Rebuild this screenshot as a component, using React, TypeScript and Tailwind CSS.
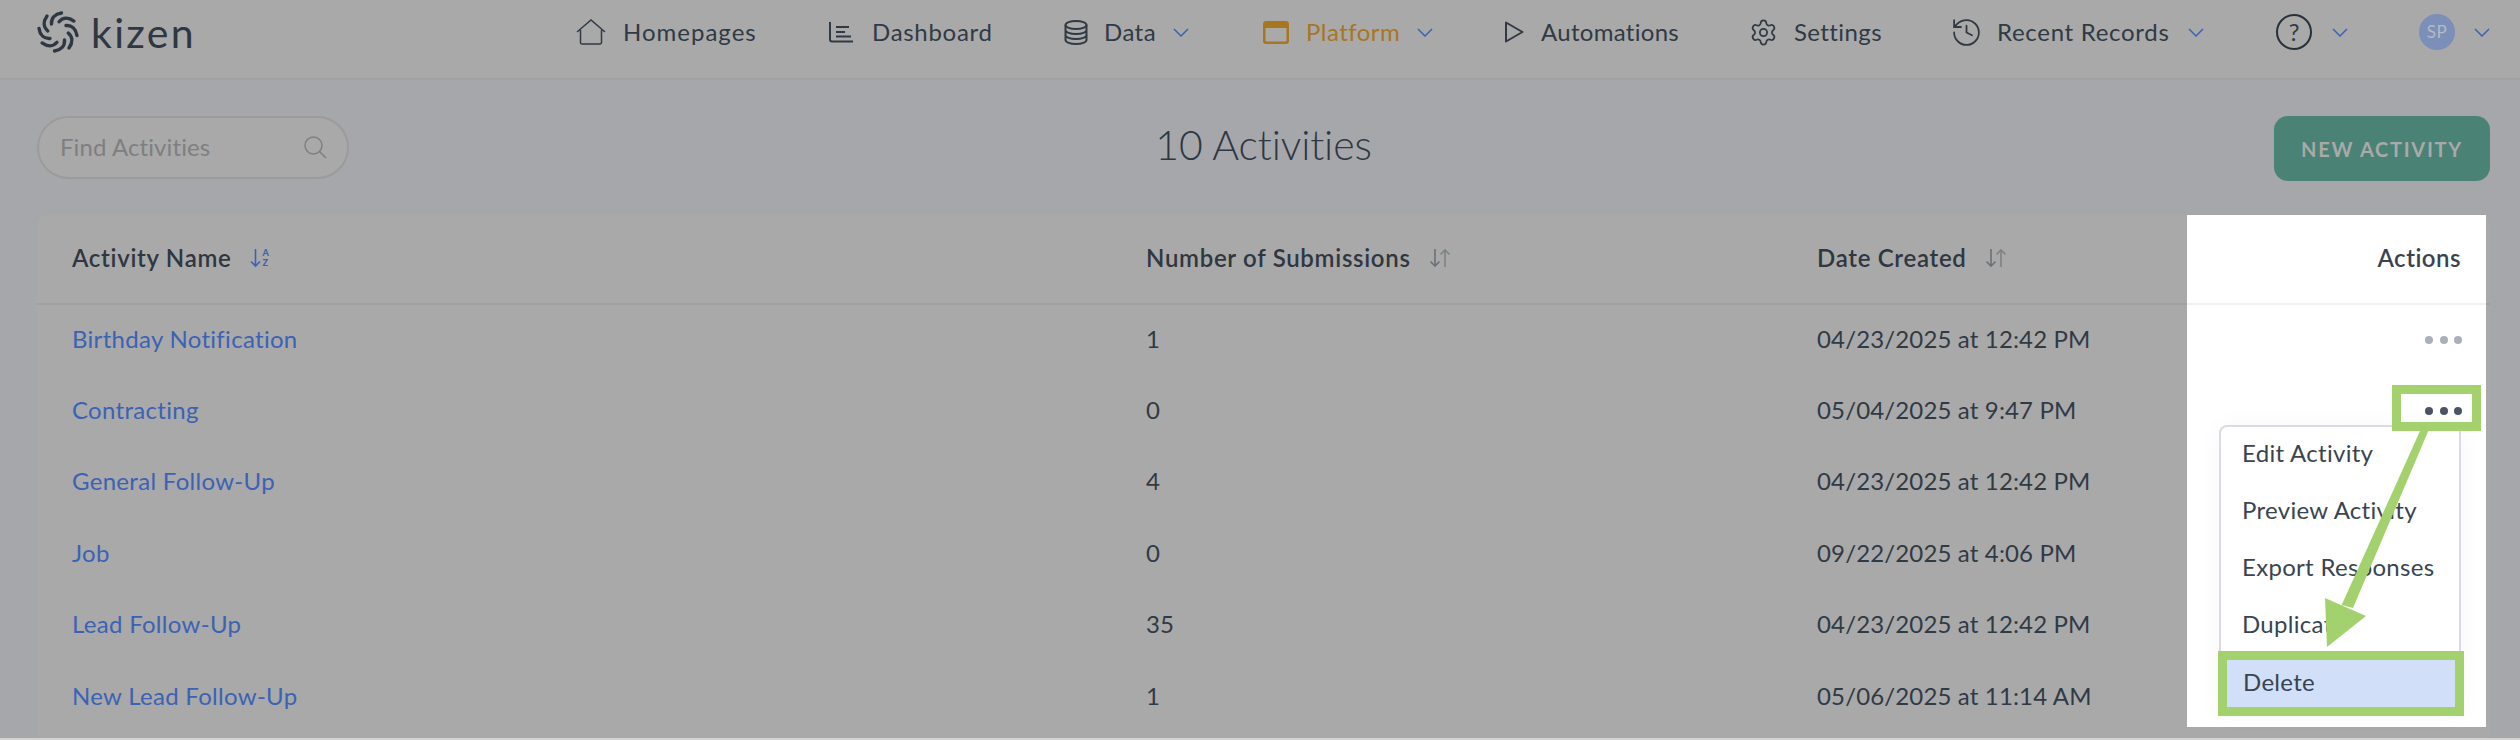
import React from 'react';
import { History, Settings } from 'lucide-react';

const rows = [
  { name: 'Birthday Notification', count: '1', date: '04/23/2025 at 12:42 PM' },
  { name: 'Contracting', count: '0', date: '05/04/2025 at 9:47 PM' },
  { name: 'General Follow-Up', count: '4', date: '04/23/2025 at 12:42 PM' },
  { name: 'Job', count: '0', date: '09/22/2025 at 4:06 PM' },
  { name: 'Lead Follow-Up', count: '35', date: '04/23/2025 at 12:42 PM' },
  { name: 'New Lead Follow-Up', count: '1', date: '05/06/2025 at 11:14 AM' },
];

const menuItems = ['Edit Activity', 'Preview Activity', 'Export Responses', 'Duplicate'];

const Chevron = ({ className }: { className?: string }) => (
  <svg width="16" height="9" viewBox="0 0 16 9" fill="none" stroke="#3b62b5" strokeWidth="1.5" className={className}>
    <path d="M1 1l7 7 7-7" />
  </svg>
);

const LogoMark = () => (
  <svg width="42" height="42" viewBox="-21 -21 42 42" fill="none" stroke="#2e3742" strokeWidth="3.4" strokeLinecap="round">
    {[0, 45, 90, 135, 180, 225, 270, 315].map((a) => (
      <path key={a} d="M-6.500 -8C-7 -14 -3 -18 3.500 -19" transform={`rotate(${a})`} />
    ))}
  </svg>
);

const NavItem = ({
  width,
  iconWidth,
  label,
  icon,
  chevronGap,
  color = 'text-[#303a45]',
  tracking = 'tracking-[0.45px]',
}: {
  width: string;
  iconWidth: string;
  label: string;
  icon: React.ReactNode;
  chevronGap?: string;
  color?: string;
  tracking?: string;
}) => (
  <div className={`flex items-center ${width}`}>
    <div className={`flex shrink-0 items-center ${iconWidth}`}>{icon}</div>
    <span className={`text-[24px] ${tracking} ${color}`}>{label}</span>
    {chevronGap && <Chevron className={chevronGap} />}
  </div>
);

const SortArrows = () => (
  <svg width="22" height="20" viewBox="0 0 22 20" fill="none" strokeWidth="1.6" className="ml-[18px]">
    <path d="M6 1v17M1.500 13.500L6 18l4.500-4.500" stroke="#6c7177" />
    <path d="M16 19V2M11.500 6.500L16 2l4.500 4.500" stroke="#7d8286" />
  </svg>
);

export default function App() {
  return (
    <div className="h-[740px] w-[2520px] overflow-hidden bg-[#a6a7aa] text-[#303a45]" style={{ fontFamily: 'Lato, sans-serif' }}>
      {/* top nav */}
      <nav className="flex h-[80px] items-center border-b-2 border-[#a1a1a1] bg-[#a9a9a9] pb-[14px] pl-[37px]">
        <div className="flex w-[539px] items-center">
          <LogoMark />
          <span className="ml-[12px] text-[41px] leading-none font-normal tracking-[2.300px] text-[#2e3742]">kizen</span>
        </div>
        <NavItem
          width="w-[252px]"
          iconWidth="w-[47px]"
          label="Homepages"
          tracking="tracking-[1px]"
          icon={
            <svg width="30" height="26" viewBox="0 0 30 26" fill="none" stroke="#303a45" strokeWidth="1.5">
              <path d="M1 13L15 1l14 12M4.500 11v12.500a1.500 1.500 0 0 0 1.500 1.500h18a1.500 1.500 0 0 0 1.500-1.500V11" />
            </svg>
          }
        />
        <NavItem
          width="w-[236px]"
          iconWidth="w-[44px]"
          label="Dashboard"
          tracking="tracking-[0.7px]"
          icon={
            <svg width="26" height="22" viewBox="0 0 26 22" fill="none" stroke="#303a45" strokeWidth="2">
              <path d="M2 1v17.500a2 2 0 0 0 2 2h21M8 6h13M8 11h9M8 15.500h15" />
            </svg>
          }
        />
        <NavItem
          width="w-[199px]"
          iconWidth="w-[40px]"
          label="Data"
          chevronGap="ml-[17px]"
          icon={
            <svg width="24" height="25" viewBox="0 0 24 25" fill="none" stroke="#303a45" strokeWidth="2">
              <ellipse cx="12" cy="5" rx="10.500" ry="4" />
              <path d="M1.500 5v15c0 2.200 4.700 4 10.500 4s10.500-1.800 10.500-4V5M1.500 10c0 2.200 4.700 4 10.500 4s10.500-1.800 10.500-4M1.500 15c0 2.200 4.700 4 10.500 4s10.500-1.800 10.500-4" />
            </svg>
          }
        />
        <NavItem
          width="w-[239px]"
          iconWidth="w-[43px]"
          label="Platform"
          color="text-[#a8761e]"
          chevronGap="ml-[17px]"
          icon={
            <svg width="26" height="23" viewBox="0 0 26 23" fill="none">
              <rect x="1.250" y="1.250" width="23.500" height="20.500" rx="2" stroke="#a8761e" strokeWidth="2.500" />
              <rect x="1" y="1" width="24" height="6" fill="#a8761e" />
            </svg>
          }
        />
        <NavItem
          width="w-[249px]"
          iconWidth="w-[39px]"
          label="Automations"
          tracking="tracking-[0.3px]"
          icon={
            <svg width="20" height="22" viewBox="0 0 20 22" fill="none" stroke="#303a45" strokeWidth="2" strokeLinejoin="round" className="ml-[2px]">
              <path d="M2 1.500L18.500 11 2 20.500z" />
            </svg>
          }
        />
        <NavItem
          width="w-[202px]"
          iconWidth="w-[43px]"
          label="Settings"
          tracking="tracking-[0.4px]"
          icon={<Settings size={29} strokeWidth={1.45} color="#303a45" className="-ml-[2px] shrink-0" />}
        />
        <NavItem
          width="w-[323px]"
          iconWidth="w-[44px]"
          label="Recent Records"
          tracking="tracking-[0.7px]"
          chevronGap="ml-[18px]"
          icon={<History size={33} strokeWidth={1.3} color="#303a45" className="-ml-[3px] shrink-0" />}
        />
        <div className="flex w-[143px] items-center">
          <div className="flex h-[36px] w-[36px] items-center justify-center rounded-full border-2 border-[#26303a] text-[24px] leading-none">?</div>
          <Chevron className="ml-[20px]" />
        </div>
        <div className="flex items-center">
          <div className="flex h-[36px] w-[36px] items-center justify-center rounded-full bg-[#7b8fb8] text-[17px] tracking-[0.5px] text-[#b4bac6]">SP</div>
          <Chevron className="ml-[19px]" />
        </div>
      </nav>

      {/* search, title, button */}
      <div className="grid h-[135px] grid-cols-[1fr_auto_1fr] px-[37px] pt-[36px] pr-[30px]">
        <div className="flex h-[63px] w-[312px] items-center justify-between rounded-full border-2 border-[#9b9b9d] bg-[#a9a9a9] pr-[20px] pb-[2px] pl-[21px]">
          <span className="text-[24px] tracking-[0.1px] text-[#7e7f82]">Find Activities</span>
          <svg width="23" height="23" viewBox="0 0 23 23" fill="none" stroke="#7e7f82" strokeWidth="1.5" className="mt-[2px]">
            <circle cx="9.500" cy="9.500" r="8.500" />
            <path d="M15.500 15.500L22 22" />
          </svg>
        </div>
        <h1 className="h-[63px] text-[41px] leading-[58px] font-light tracking-[-0.1px] text-[#2e3742]">10 Activities</h1>
        <div className="flex justify-end">
          <button className="flex h-[65px] w-[216px] items-center justify-center rounded-[14px] bg-[#4a8375] text-[20px] font-bold tracking-[1.700px] text-[#a9a9a9]">
            NEW ACTIVITY
          </button>
        </div>
      </div>

      {/* table */}
      <div className="mr-[30px] ml-[37px] flex h-[523px] rounded-t-[10px] bg-[#a9a9a9]">
        <div className="flex-1">
          <div className="grid h-[90px] grid-cols-[1074px_671px_1fr] items-center border-b-2 border-[#a1a1a1] pb-[3px] pl-[35px] text-[24px] font-semibold tracking-[0.7px] text-[#2f3740]">
            <div className="flex items-center">
              Activity Name
              <div className="relative ml-[19px] flex h-[20px] w-[22px] items-center">
                <svg width="11" height="20" viewBox="0 0 11 20" fill="none" stroke="#3b62b5" strokeWidth="1.600">
                  <path d="M5.500 1v17M1 13.500L5.500 18l4.500-4.500" />
                </svg>
                <span className="ml-px flex flex-col text-[9px] leading-[10px] font-black text-[#3b62b5]">
                  <span>A</span>
                  <span>Z</span>
                </span>
              </div>
            </div>
            <div className="flex items-center">
              Number of Submissions
              <SortArrows />
            </div>
            <div className="flex items-center">
              Date Created
              <SortArrows />
            </div>
          </div>
          {rows.map((row) => (
            <div key={row.name} className="grid h-[71.400px] grid-cols-[1074px_671px_1fr] items-center pb-[4px] pl-[35px] text-[24px] tracking-[0.15px] text-[#303a45]">
              <span className="tracking-[0.3px] text-[#3b62b5]">{row.name}</span>
              <span>{row.count}</span>
              <span>{row.date}</span>
            </div>
          ))}
        </div>

        {/* actions column, spotlighted */}
        <div className="relative h-[512px] w-[299px] bg-white">
          <div className="flex h-[90px] items-center justify-end border-b-2 border-[#f1f1f3] pr-[25px] pb-[3px] text-[24px] font-semibold tracking-[0.5px] text-[#3a4450]">Actions</div>
          <div className="flex h-[71px] items-center justify-end gap-[6.500px] pr-[24px] pb-[2px]">
            <i className="h-[8px] w-[8px] rounded-full bg-[#a9b0bc]" />
            <i className="h-[8px] w-[8px] rounded-full bg-[#a9b0bc]" />
            <i className="h-[8px] w-[8px] rounded-full bg-[#a9b0bc]" />
          </div>
          <div className="flex h-[71px] items-center justify-end gap-[6.500px] pr-[24px] pb-[2px]">
            <i className="h-[8px] w-[8px] rounded-full bg-[#4a5462]" />
            <i className="h-[8px] w-[8px] rounded-full bg-[#4a5462]" />
            <i className="h-[8px] w-[8px] rounded-full bg-[#4a5462]" />
          </div>

          <div className="absolute top-[210px] left-[32px] h-[290px] w-[242px] rounded-t-[8px] border-2 border-b-0 border-[#d8dbe3] bg-white text-[24px] tracking-[0.3px] text-[#3a4450] shadow-[0_0_24px_rgba(0,0,0,0.04)]">
            {menuItems.map((item) => (
              <div key={item} className="flex h-[57px] items-center pb-[5px] pl-[21px]">
                {item}
              </div>
            ))}
            <div className="absolute top-[224px] -left-[3px] flex h-[65px] w-[246px] items-center border-[9px] border-[#a3d16d] bg-[#d1dff9] pb-[3px] pl-[16px] text-[#3a4450]">
              Delete
            </div>
          </div>

          {/* annotation */}
          <div className="absolute top-[170px] left-[205px] h-[46px] w-[89px] border-[9px] border-[#a3d16d]" />
          <svg width="299" height="512" viewBox="0 0 299 512" className="absolute top-0 left-0" fill="#a3d16d">
            <polygon points="233,216 241.300,216 166,393 154.700,390" />
            <polygon points="138,383 179,401 140,432" />
          </svg>
        </div>
        <div className="h-[90px] w-[4px] border-b-2 border-[#a1a1a1]" />
      </div>
      <div className="h-[2px] bg-[#d3d3d3]" />
    </div>
  );
}
